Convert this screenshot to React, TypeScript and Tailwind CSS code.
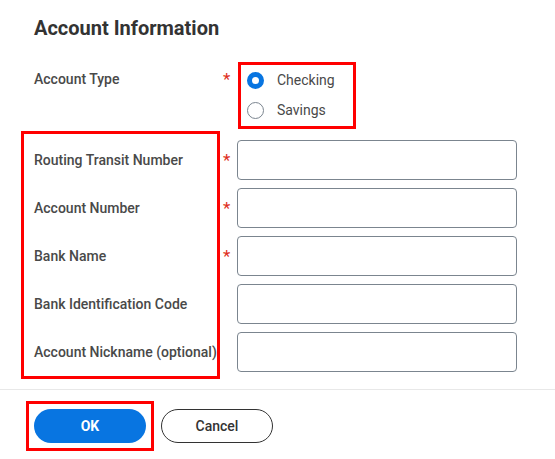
import React from 'react';

const fields = [
  { label: 'Routing Transit Number', required: true },
  { label: 'Account Number', required: true },
  { label: 'Bank Name', required: true },
  { label: 'Bank Identification Code', required: false },
  { label: 'Account Nickname (optional)', required: false },
];

function Radio({ checked, label }: { checked: boolean; label: string }) {
  return (
    <div className="flex h-[30px] items-center">
      {checked ? (
        <span className="h-[17px] w-[17px] rounded-full border-[5px] border-[#0875e1] bg-white" />
      ) : (
        <span className="h-[17px] w-[17px] rounded-full border border-[#7b858f] bg-white" />
      )}
      <span className="ml-[13px] text-[14px] leading-5 text-[#494949]">{label}</span>
    </div>
  );
}

export default function App() {
  return (
    <div
      className="h-[459px] w-[555px] overflow-hidden bg-white"
      style={{ fontFamily: 'Roboto, "Liberation Sans", sans-serif' }}
    >
      <div className="pl-[34px] pt-[14px]">
        <h2 className="text-[20px] font-bold leading-[28px] text-[#333333]">Account Information</h2>
      </div>

      {/* Account Type */}
      <div className="mt-[20px] flex pl-[34px]">
        <div className="w-[189px] pt-[7px] text-[14px] font-medium leading-5 text-[#494949]">Account Type</div>
        <div className="w-[15px] pt-[7px] text-[17px] leading-5 text-[#de2e21]">*</div>
        <div className="w-[118px] border-[3px] border-[#ff0000] pb-[1px] pl-[6px]">
          <Radio checked label="Checking" />
          <Radio checked={false} label="Savings" />
        </div>
      </div>

      {/* Bank fields */}
      <div className="mt-[2px] flex pl-[21px]">
        <div className="w-[199px] border-[3px] border-[#ff0000] pl-[10px] pt-[2px]">
          {fields.map((f) => (
            <div key={f.label} className="flex h-[48px] items-center whitespace-nowrap text-[14px] font-medium text-[#494949]">
              {f.label}
            </div>
          ))}
        </div>
        <div className="pt-[5px]">
          {fields.map((f) => (
            <div key={f.label} className="flex h-[48px] items-center">
              <div className="w-[17px] pl-[3px] text-[17px] leading-5 text-[#de2e21]">{f.required ? '*' : ''}</div>
              <input className="h-[40px] w-[280px] rounded-[4px] border border-[#7b858f] bg-white px-2 text-[14px] outline-none" />
            </div>
          ))}
        </div>
      </div>

      <div className="mt-[10px] h-px w-full bg-[#e8e8e8]" />

      {/* Buttons */}
      <div className="mt-[11px] flex items-center pl-[26px]">
        <div className="border-[3px] border-[#ff0000] p-[5px]">
          <button className="h-[34px] w-[112px] rounded-full bg-[#0875e1] text-[14px] font-bold text-white">OK</button>
        </div>
        <button className="ml-[7px] h-[34px] w-[112px] rounded-full border border-[#333333] bg-white text-[14px] font-medium text-[#333333]">
          Cancel
        </button>
      </div>
    </div>
  );
}
